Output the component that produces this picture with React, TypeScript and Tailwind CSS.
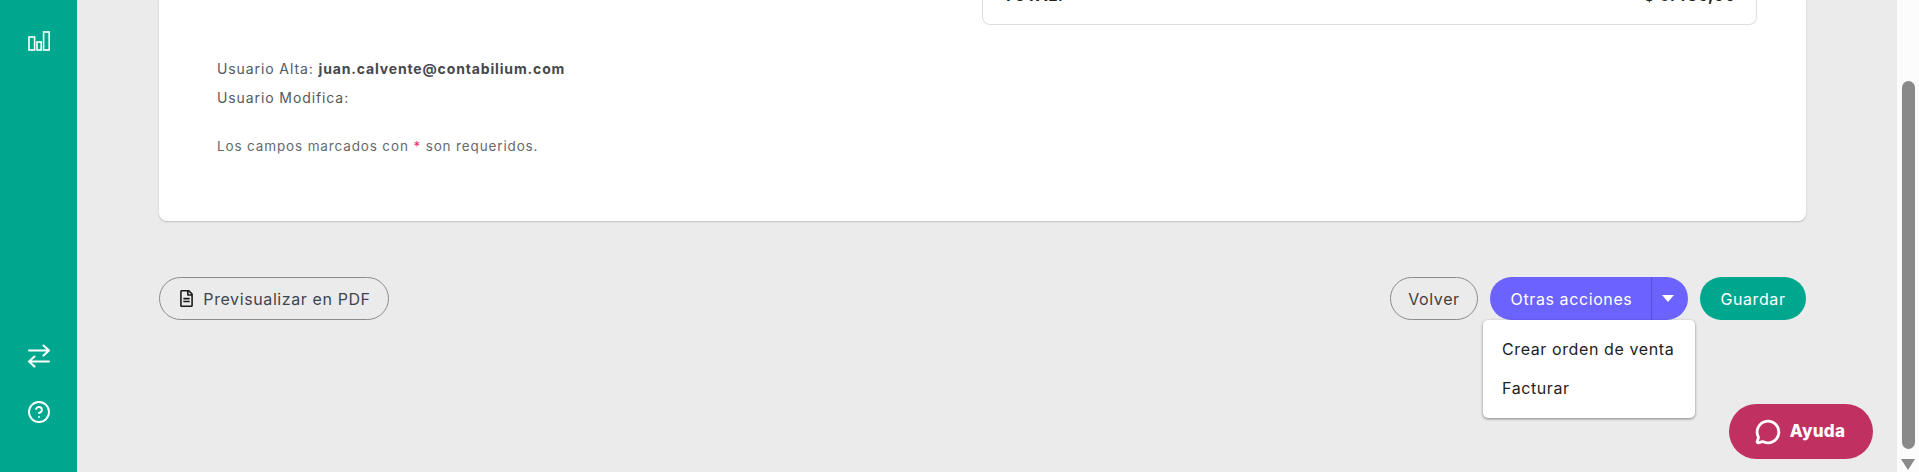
import { CircleHelp, MessageCircle } from "lucide-react";
import { FaRegFileAlt } from "react-icons/fa";

const font = "font-['Inter',sans-serif]";

export default function App() {
  return (
    <div className={`flex h-[472px] w-[1919px] overflow-hidden bg-[#ebebeb] ${font}`}>
      <aside className="flex w-[77px] shrink-0 flex-col items-center bg-[#00a78f] text-white">
        <svg className="mt-[31px]" width="22" height="20" viewBox="0 0 22 20" fill="none" stroke="currentColor" strokeWidth="1.6">
          <rect x="1" y="6" width="5.6" height="13" />
          <rect x="9" y="11" width="4.2" height="8" />
          <rect x="15.6" y="1" width="5.6" height="18" />
        </svg>
        <svg className="mt-auto" width="22" height="24" viewBox="0 0 22 24" fill="none" stroke="currentColor" strokeWidth="2" strokeLinecap="round" strokeLinejoin="round">
          <path d="M1 6.5h20M15.5 1.5l5.5 5-5.500 5" />
          <path d="M21 17.5H1M6.5 12.5l-5.500 5 5.500 5" />
        </svg>
        <CircleHelp className="mt-[32px] mb-[48px]" size={24} strokeWidth={1.9} />
      </aside>

      <main className="relative min-w-0 flex-1">
        <div className="ml-[82px] mr-[91px] h-[221px] rounded-b-lg bg-white shadow-[0_1px_2px_rgba(0,0,0,0.2)]">
          <div className="flex h-[25px] justify-end overflow-hidden pr-[49px]">
            <div className="flex h-[25px] w-[775px] items-end justify-between rounded-b-lg border-x border-b border-[#dedede] px-[20px] pb-[19px] text-[16px] font-bold leading-[20px] tracking-[0.5px] text-[#222]">
              <span>TOTAL:</span>
              <span>$ 3.456,00</span>
            </div>
          </div>
          <div className="pl-[58px] pt-[29px] text-[14px] leading-[29px] tracking-[0.9px] text-[#55595f]">
            <p>
              Usuario Alta: <strong className="font-bold tracking-[0.85px] text-[#46484c]">juan.calvente@contabilium.com</strong>
            </p>
            <p>Usuario Modifica:</p>
            <p className="mt-[20px] text-[13.5px] tracking-[0.86px] text-[#666a70]">
              Los campos marcados con <span className="text-[#e8336d]">*</span> son requeridos.
            </p>
          </div>
        </div>

        <div className="ml-[82px] mr-[91px] mt-[56px] flex items-center justify-between text-[16px] leading-[20px] tracking-[0.6px]">
          <button className="flex h-[43px] w-[230px] items-center justify-center gap-[8px] rounded-full border border-[#8b8b8b] pl-[1px] text-[#3c4650]">
            <FaRegFileAlt size={17} className="text-[#1c1c1c]" />
            Previsualizar en PDF
          </button>
          <div className="flex items-center gap-[12px]">
            <button className="h-[43px] w-[88px] rounded-full border border-[#8b8b8b] text-[#3f3f3f]">Volver</button>
            <div className="relative flex h-[43px] w-[198px] rounded-full bg-[#6c63ff] text-white">
              <span className="flex flex-1 items-center justify-center border-r border-[#564ddb] pl-[2px]">Otras acciones</span>
              <span className="flex w-[36px] items-center justify-center pr-[4px]">
                <span className="h-0 w-0 border-x-[6px] border-t-[7px] border-x-transparent border-t-white" />
              </span>
              <div className="absolute left-[-7px] top-[43px] z-10 flex h-[98px] w-[212px] flex-col rounded-[5px] bg-white pl-[19px] pt-[10px] text-[16px] leading-[39px] text-[#222] shadow-[0_1px_3px_rgba(0,0,0,0.45)]">
                <span>Crear orden de venta</span>
                <span>Facturar</span>
              </div>
            </div>
            <button className="h-[43px] w-[106px] rounded-full bg-[#00a78f] text-white">Guardar</button>
          </div>
        </div>

        <div className="absolute left-[1652px] top-[404px] flex h-[55px] w-[144px] items-center justify-center gap-[9px] rounded-full bg-[#c03060] pr-[2px] text-[17px] font-extrabold tracking-[0.3px] text-white">
          <MessageCircle size={26} strokeWidth={2.6} />
          Ayuda
        </div>
      </main>

      <div className="flex w-[22px] shrink-0 flex-col items-center bg-[#fcfcfc] pt-[81px]">
        <div className="h-[368px] w-[13px] rounded-full bg-[#8a8a8a]" />
        <div className="mt-[10px] h-0 w-0 border-x-[7.5px] border-t-[11px] border-x-transparent border-t-[#8a8a8a]" />
      </div>
    </div>
  );
}
